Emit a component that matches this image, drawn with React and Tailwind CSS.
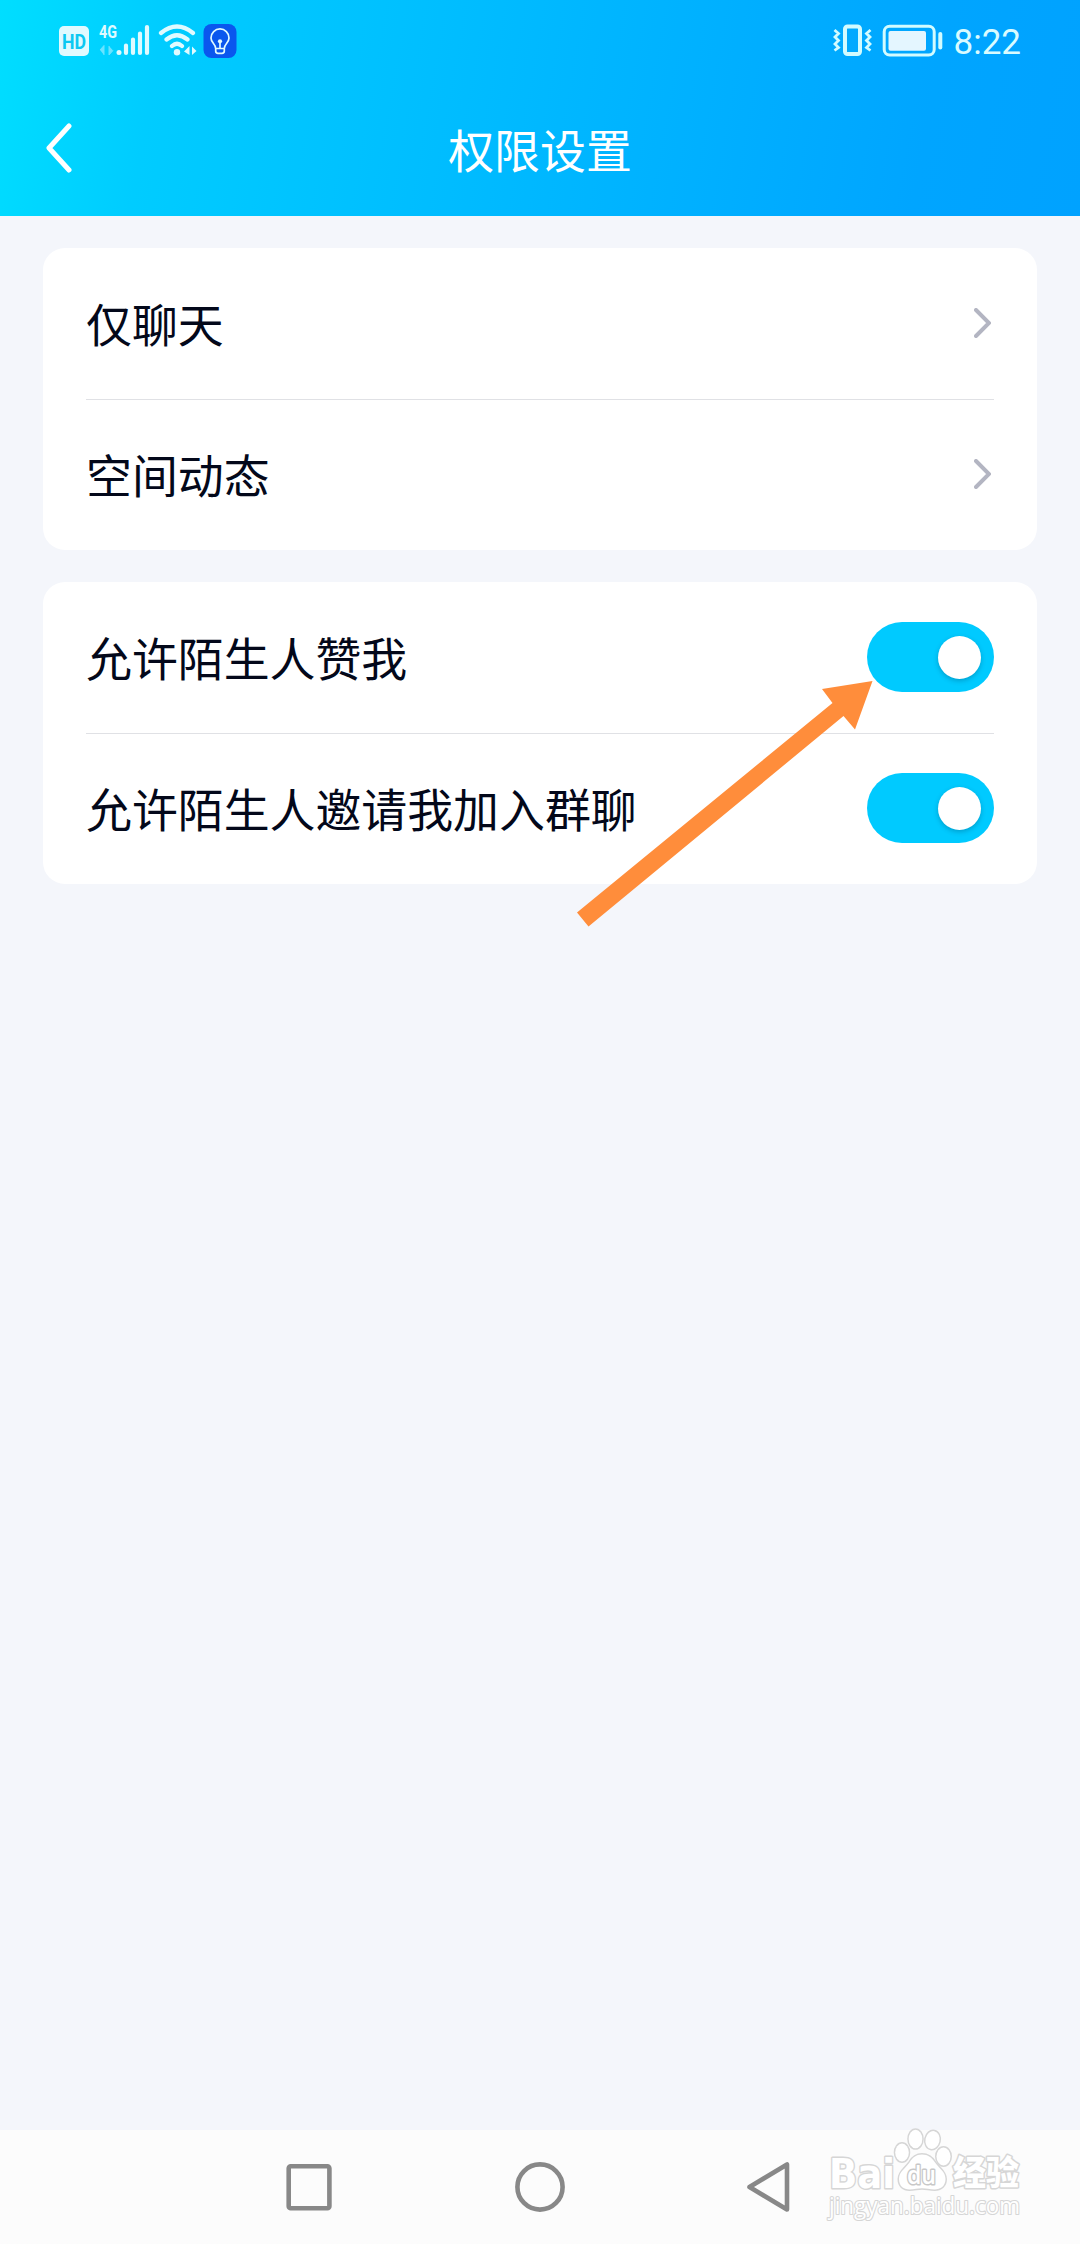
import { useState } from 'react';

function StatusLeft() {
  return (
    <svg className="h-9 w-[180px] font-[Roboto] font-bold" viewBox="59 22 180 36" fill="none" stroke="#e0faff">
      {/* HD */}
      <rect x="59" y="26" width="30" height="30" rx="5" fill="#e0faff" stroke="none" />
      <text x="62" y="48.5" fontSize="20" textLength="24" lengthAdjust="spacingAndGlyphs" fill="#0cc8f2" stroke="none">
        HD
      </text>
      {/* signal */}
      <text x="99" y="38" fontSize="18.5" textLength="18" lengthAdjust="spacingAndGlyphs" fill="#e0faff" stroke="none">
        4G
      </text>
      <path d="M100 50l4-4.5V55M109 46v9l4-4.5" fill="#6be3ff" stroke="#6be3ff" strokeWidth="1" />
      <circle cx="119" cy="52.5" r="2.5" fill="#e0faff" stroke="none" />
      <path d="M126 53V45.500M133 53V39.500M140 53V33.500M147 53V27" strokeWidth="4.2" strokeLinecap="round" />
      {/* wifi */}
      <path d="M161 33Q177 20 193 33M166.500 39.500Q177 31 187.500 39.500M172 46Q177 41.500 182 46" strokeWidth="4.2" strokeLinecap="round" />
      <circle cx="177" cy="52.3" r="3.2" fill="#e0faff" stroke="none" />
      <path d="M184 51.500l5.500-5.500v9zM192 46.500V55l4.500-4z" fill="#e0faff" stroke="none" />
      {/* bulb */}
      <rect x="203.5" y="24" width="33" height="34" rx="8" fill="#0a57ee" stroke="none" />
      <path d="M215.700 48.500c0-4.500-4.700-5.500-4.700-10.600a9 9 0 0 1 18 0c0 5.100-4.700 6.100-4.700 10.600zM215.700 48.500V51q0 2.300 2.300 2.300h4q2.300 0 2.300-2.300v-2.500M220 48v-6" strokeWidth="1.7" strokeLinejoin="round" />
      <circle cx="220" cy="41.3" r="2.1" fill="#e0faff" stroke="none" />
    </svg>
  );
}

function StatusRight() {
  return (
    <div className="flex items-center gap-[11px]">
      <svg className="h-9 w-[110px]" viewBox="834 22 110 36" fill="none" stroke="#d2fbff">
        <rect x="846" y="26.5" width="15" height="27.5" rx="2.5" strokeWidth="4" />
        <path d="M835.500 30l4 3.500-3.500 3.500 3.500 3.500-3.500 3.500 3.500 3.500-4 3M871.500 30l-4 3.500 3.500 3.500-3.500 3.500 3.500 3.500-3.500 3.500 4 3" strokeWidth="2.8" />
        <rect x="885.2" y="26.2" width="50" height="28.8" rx="5.5" strokeWidth="3" />
        <rect x="889.5" y="31" width="37.5" height="19.8" rx="2" fill="#e4f6ff" stroke="none" />
        <path d="M941.300 34v13.500" strokeWidth="4" strokeLinecap="round" />
      </svg>
      <span className="pt-[5px] font-[Roboto] text-[35px] leading-9 text-[#d9fbff]">8:22</span>
    </div>
  );
}

function Switch() {
  const [on, setOn] = useState(true);

  return (
    <button
      role="switch"
      aria-checked={on}
      onClick={() => setOn(!on)}
      className={`flex h-[70px] w-[127px] items-center rounded-full px-[13.5px] ${on ? 'justify-end bg-[#00caff]' : 'justify-start bg-gray-300'}`}
    >
      <span className="size-[43px] rounded-full bg-white shadow-[0_2px_5px_rgba(0,60,90,0.3)]" />
    </button>
  );
}

function Arrow() {
  return (
    <svg className="mr-[3px] h-[30px] w-[17px]" viewBox="0 0 17 30" fill="none" stroke="#b3b5c2" strokeWidth="4" strokeLinecap="round">
      <path d="M2 2l13 13L2 28" />
    </svg>
  );
}

function Row({ label, children }) {
  return (
    <div className="flex h-[151px] items-center justify-between pb-px not-first:shadow-[inset_0_1px_0_#e0e1e5]">
      <span className="pb-0.5 text-[45.9px] leading-[60px]">{label}</span>
      {children}
    </div>
  );
}

function Card({ children }) {
  return <section className="rounded-[22px] bg-white px-[43px]">{children}</section>;
}

function Watermark() {
  return (
    <svg
      className="absolute left-[822px] top-[-6px] h-[100px] w-[206px] [paint-order:stroke]"
      viewBox="822 2124 206 100"
      fill="#fff"
      stroke="#d6d6d6"
      strokeWidth="3"
      strokeLinejoin="round"
    >
      <text x="829" y="2188" fontFamily="DejaVu Sans" fontSize="41" fontWeight="700" textLength="66" lengthAdjust="spacingAndGlyphs">Bai</text>
      <g strokeWidth="3">
        <ellipse cx="902" cy="2152.5" rx="6.8" ry="9" />
        <ellipse cx="915.5" cy="2139" rx="6.8" ry="9.3" />
        <ellipse cx="932.5" cy="2140" rx="7" ry="9" transform="rotate(12 932.5 2140)" />
        <ellipse cx="943.5" cy="2156.5" rx="7" ry="9" />
        <path d="M922 2154.500c6 0 10 3 13 8 4 6 10.500 9 10.500 16.500 0 7-5 10.500-11 10.500-5 0-8-1.200-12.500-1.200s-7.500 1.200-12.500 1.200c-6 0-10.500-3.500-10.500-10.500 0-7.500 6.500-10.500 10.500-16.500 3-5 6.500-8 12.500-8z" />
      </g>
      <text x="907" y="2184" fontFamily="Open Sans" fontSize="26" fontWeight="600" textLength="29" lengthAdjust="spacingAndGlyphs" stroke="#c8c8c8">du</text>
      <text x="953" y="2185" fontFamily="Noto Sans CJK SC" fontSize="34" fontWeight="900" textLength="66" lengthAdjust="spacingAndGlyphs">经验</text>
      <text x="829" y="2214" fontFamily="Open Sans" fontSize="23" strokeWidth="2.2" textLength="191" lengthAdjust="spacingAndGlyphs">jingyan.baidu.com</text>
    </svg>
  );
}

export default function App() {
  return (
    <div className="relative flex h-[2244px] w-[1080px] flex-col bg-[#f4f6fb] font-['Noto_Sans_CJK_SC',sans-serif] text-[#03081a]">
      <header className="flex h-[216px] flex-col bg-[linear-gradient(100deg,#00deff_0%,#00ccff_15%,#00b7ff_52%,#00a5ff_85%,#00a2ff_100%)] text-white">
        <div className="flex h-20 items-center justify-between pl-[59px] pr-[59px]">
          <StatusLeft />
          <StatusRight />
        </div>
        <div className="grid h-[136px] grid-cols-[72px_1fr_72px] items-center">
          <svg className="h-[50px] w-[27px] justify-self-end" viewBox="0 0 27 50" fill="none" stroke="#fff" strokeWidth="5" strokeLinecap="round" strokeLinejoin="round">
            <path d="M24 3L4 25l20 22" />
          </svg>
          <h1 className="text-center text-[45.9px] leading-[60px]">权限设置</h1>
        </div>
      </header>

      <main className="flex flex-1 flex-col gap-8 px-[43px] py-8">
        <Card>
          <Row label="仅聊天">
            <Arrow />
          </Row>
          <Row label="空间动态">
            <Arrow />
          </Row>
        </Card>
        <Card>
          <Row label="允许陌生人赞我">
            <Switch />
          </Row>
          <Row label="允许陌生人邀请我加入群聊">
            <Switch />
          </Row>
        </Card>
      </main>

      <nav className="relative flex h-[114px] items-center justify-between bg-[#fcfcfc] pl-[284px] pr-[289px]">
        <svg className="size-[50px]" viewBox="0 0 50 50" fill="none" stroke="#888" strokeWidth="4.6">
          <rect x="4.7" y="4.2" width="40.7" height="42" rx="2" />
        </svg>
        <svg className="size-[50px]" viewBox="0 0 50 50" fill="none" stroke="#888" strokeWidth="4.6">
          <circle cx="25" cy="25" r="22.6" />
        </svg>
        <svg className="h-[50px] w-[45px]" viewBox="0 0 45 50" fill="none" stroke="#888" strokeWidth="4.6" strokeLinejoin="round">
          <path d="M41 2.500v45L3.500 25z" />
        </svg>
        <Watermark />
      </nav>

      {/* pointer to the first switch */}
      <svg className="pointer-events-none absolute left-[570px] top-[675px] h-[260px] w-[310px]" viewBox="570 675 310 260" fill="#ff8d3b">
        <path d="M577 912.500L832.500 703 822 689l50.500-8-17.500 48.500-11.500-13.500L588.500 926.500z" />
      </svg>
    </div>
  );
}
